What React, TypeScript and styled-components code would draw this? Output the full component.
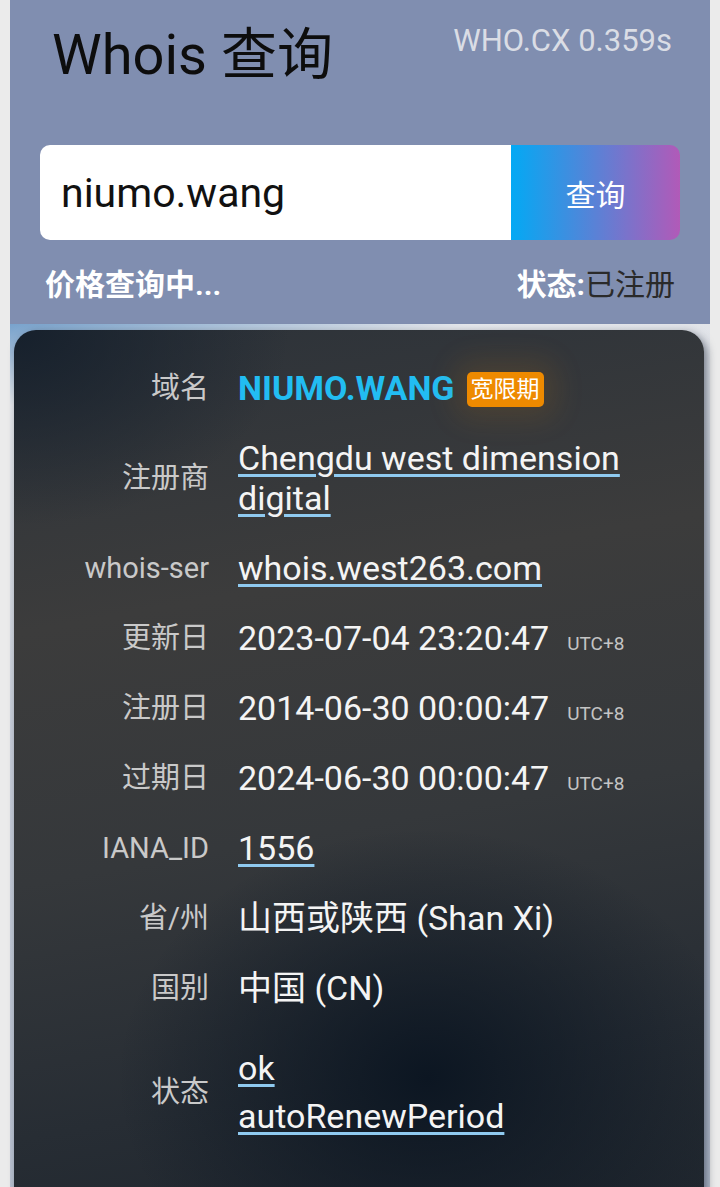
import React from "react";
import styled, { createGlobalStyle } from "styled-components";

const Global = createGlobalStyle`
  html, body { margin: 0; padding: 0; }
  body {
    background: #ebebeb;
    font-family: Roboto, "Noto Sans CJK SC", sans-serif;
  }
`;

const Page = styled.div`
  margin: 0 10px;
  width: 700px;
`;

const Header = styled.header`
  background: #808eb0;
  padding: 22px 30px 19px;
`;

const TopRow = styled.div`
  display: flex;
  justify-content: space-between;
  align-items: flex-start;
  padding: 0 8px 0 12px;
  margin-bottom: 57px;
`;

const Title = styled.h1`
  margin: 0;
  font-weight: 400;
  font-size: 56px;
  line-height: 66px;
  color: #0d0d0d;
`;

const Meta = styled.div`
  margin-top: 1px;
  font-size: 31px;
  line-height: 36px;
  color: #dadde5;
`;

const SearchBar = styled.form`
  display: flex;
  height: 95px;
  border-radius: 10px;
  overflow: hidden;
  margin: 0;
`;

const SearchInput = styled.div`
  flex: 1;
  background: #fff;
  display: flex;
  align-items: center;
  padding-left: 21px;
  font-size: 41px;
  color: #111;
`;

const SearchButton = styled.button`
  width: 169px;
  border: 0;
  background: linear-gradient(to right, #03a9f4, #b15ab8);
  color: #fff;
  font-family: Roboto, "Noto Sans CJK SC", sans-serif;
  font-size: 30px;
  padding: 0;
`;

const StatusRow = styled.div`
  display: flex;
  justify-content: space-between;
  margin-top: 25px;
  padding: 0 5px;
  font-size: 30px;
  line-height: 40px;
  font-weight: 700;
  color: #fff;
`;

const Registered = styled.span`
  color: #2a2a2a;
  font-weight: 400;
`;

const Section = styled.section`
  padding: 6px 6px 0 4px;
  background: linear-gradient(170deg, #78a2cc 0%, #e6e8ec 8%, #c9cfda 40%, #b4bdcd 100%);
`;

const Card = styled.div`
  border-radius: 22px 22px 0 0;
  padding: 23px 0 60px;
  box-shadow: 3px 3px 8px rgba(30, 40, 60, 0.55);
  background:
    radial-gradient(ellipse 45% 28% at 60% 84%, rgba(12, 22, 34, 1) 0%, rgba(12, 22, 34, 0) 100%),
    radial-gradient(ellipse 40% 22% at 0% 0%, rgba(22, 32, 44, 1) 0%, rgba(22, 32, 44, 0) 100%),
    linear-gradient(170deg, #2c3239 0%, #3c3c3c 30%, #35383b 55%, #272d34 80%, #1e252d 100%);
`;

const Row = styled.div`
  display: flex;
  align-items: center;
  padding: 15px 0;
`;

const Label = styled.div`
  width: 195px;
  flex-shrink: 0;
  text-align: right;
  font-size: 29px;
  line-height: 40px;
  color: #c9c9c9;
`;

const Value = styled.div`
  margin-left: 29px;
  padding-right: 40px;
  font-size: 34px;
  line-height: 40px;
  color: #f4f4f4;
`;

const Link = styled.a`
  color: #f4f4f4;
  text-decoration: underline;
  text-decoration-color: #8fcaf0;
  text-decoration-thickness: 3px;
  text-underline-offset: 4px;
`;

const Domain = styled.span`
  font-weight: 700;
  color: #22bdf2;
`;

const Badge = styled.span`
  display: inline-flex;
  align-items: center;
  height: 35px;
  line-height: 1;
  padding: 0 4px;
  margin-left: 12px;
  vertical-align: 3px;
  border-radius: 5px;
  background: #ee8a00;
  color: #fff;
  font-size: 23px;
  box-shadow: 0 0 30px 12px rgba(238, 138, 0, 0.12);
`;

const Tz = styled.span`
  margin-left: 18px;
  font-size: 19px;
  line-height: 1;
  color: #c4c4c4;
`;

const StatusList = styled.div`
  padding: 6px 0;
`;

const StatusItem = styled.div`
  padding: 4px 0;
`;

type Field = { label: string; content: React.ReactNode };

const fields: Field[] = [
  {
    label: "域名",
    content: (
      <>
        <Domain>NIUMO.WANG</Domain>
        <Badge>宽限期</Badge>
      </>
    ),
  },
  { label: "注册商", content: <Link>Chengdu west dimension digital</Link> },
  { label: "whois-ser", content: <Link>whois.west263.com</Link> },
  { label: "更新日", content: <>2023-07-04 23:20:47<Tz>UTC+8</Tz></> },
  { label: "注册日", content: <>2014-06-30 00:00:47<Tz>UTC+8</Tz></> },
  { label: "过期日", content: <>2024-06-30 00:00:47<Tz>UTC+8</Tz></> },
  { label: "IANA_ID", content: <Link>1556</Link> },
  { label: "省/州", content: "山西或陕西 (Shan Xi)" },
  { label: "国别", content: "中国 (CN)" },
  {
    label: "状态",
    content: (
      <StatusList>
        <StatusItem><Link>ok</Link></StatusItem>
        <StatusItem><Link>autoRenewPeriod</Link></StatusItem>
      </StatusList>
    ),
  },
];

export default function App() {
  return (
    <>
      <Global />
      <Page>
        <Header>
          <TopRow>
            <Title>Whois 查询</Title>
            <Meta>WHO.CX 0.359s</Meta>
          </TopRow>
          <SearchBar onSubmit={(e) => e.preventDefault()}>
            <SearchInput>niumo.wang</SearchInput>
            <SearchButton type="submit">查询</SearchButton>
          </SearchBar>
          <StatusRow>
            <span>价格查询中...</span>
            <span>
              状态:<Registered>已注册</Registered>
            </span>
          </StatusRow>
        </Header>
        <Section>
          <Card>
            {fields.map((f) => (
              <Row key={f.label}>
                <Label>{f.label}</Label>
                <Value>{f.content}</Value>
              </Row>
            ))}
          </Card>
        </Section>
      </Page>
    </>
  );
}
